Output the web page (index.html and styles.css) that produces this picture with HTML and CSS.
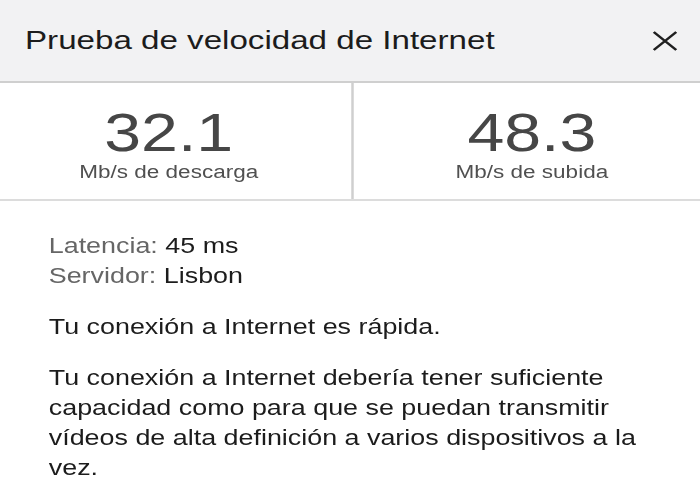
FILE: index.html
```html
<!DOCTYPE html>
<html lang="es">
<head>
    <meta charset="UTF-8">
    <title>Prueba de velocidad de Internet</title>
    <link rel="stylesheet" href="styles.css">
</head>
<body>
    <div class="screen">
        <div class="header">
            <h1 class="title">Prueba de velocidad de Internet</h1>
            <button class="close" aria-label="Cerrar">
                <svg width="20" height="20" viewBox="0 0 20 20">
                    <path d="M1 1 L19 19 M19 1 L1 19" stroke="#1f1f1f" stroke-width="2.2" fill="none"/>
                </svg>
            </button>
        </div>

        <div class="stats">
            <div class="stat stat-down">
                <div class="value">32.1</div>
                <div class="unit">Mb/s de descarga</div>
            </div>
            <div class="stat stat-up">
                <div class="value">48.3</div>
                <div class="unit">Mb/s de subida</div>
            </div>
        </div>

        <div class="details">
            <div class="info">
                <div><span class="label">Latencia:</span> 45 ms</div>
                <div><span class="label">Servidor:</span> Lisbon</div>
            </div>
            <p>Tu conexión a Internet es rápida.</p>
            <p>Tu conexión a Internet debería tener suficiente capacidad como para que se puedan transmitir vídeos de alta definición a varios dispositivos a la vez.</p>
        </div>
    </div>
</body>
</html>
```

FILE: styles.css
```css
body {
    margin: 0;
    font-family: "Liberation Sans", Arial, sans-serif;
    background-color: #fff;
    color: #1c1c1c;
    overflow: hidden;
}

/* the screen is drawn 560px wide and stretched out to the 700px window */
.screen {
    width: 560px;
    transform: scaleX(1.25);
    transform-origin: 0 0;
}

.header {
    display: flex;
    align-items: center;
    justify-content: space-between;
    height: 83px;
    padding: 0 18px 0 20px;
    background-color: #f2f2f3;
    border-bottom: 2px solid #cfcfcf;
    box-sizing: border-box;
}

.title {
    margin: 0;
    font-size: 26.5px;
    font-weight: normal;
    color: #1c1c1c;
}

.close {
    background: none;
    border: none;
    padding: 0;
    display: flex;
    cursor: pointer;
}

.stats {
    display: grid;
    grid-template-columns: 283px 1fr;
    height: 116px;
    border-bottom: 2px solid #dcdcdc;
}

.stat {
    display: flex;
    flex-direction: column;
    align-items: center;
    justify-content: center;
    padding-top: 8px;
}

.stat-down {
    border-right: 2px solid #cfcfcf;
    padding-right: 11px;
}

.stat-up {
    padding-left: 8px;
}

.value {
    font-size: 53px;
    line-height: 50px;
    color: #464646;
}

.unit {
    font-size: 18px;
    color: #505050;
    margin-top: 4px;
}

.details {
    padding: 30px 51px 0 39px;
    font-size: 21.5px;
    line-height: 30px;
}

.info .label {
    color: #666;
}

.details p {
    margin: 21px 0 0 0;
}
```
